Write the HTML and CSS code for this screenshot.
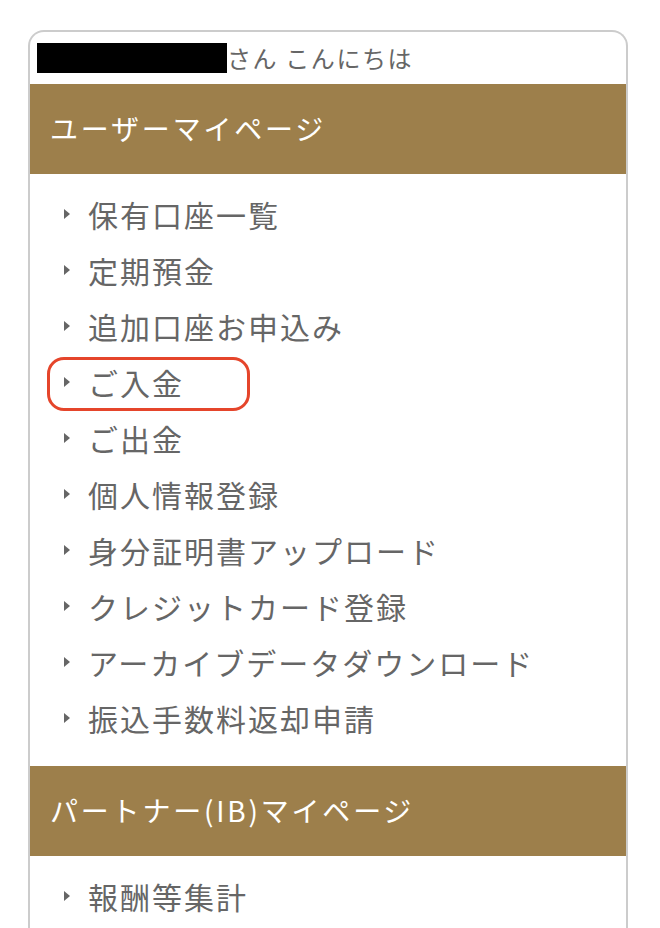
FILE: index.html
```html
<!DOCTYPE html>
<html lang="ja">
<head>
<meta charset="utf-8">
<title>マイページ</title>
<link rel="stylesheet" href="styles.css">
</head>
<body>
<div class="card">
  <div class="greeting"><span class="name-mask"></span><span class="hello">さん こんにちは</span></div>
  <h2 class="section-title">ユーザーマイページ</h2>
  <ul class="menu">
    <li class="item">保有口座一覧</li>
    <li class="item">定期預金</li>
    <li class="item">追加口座お申込み</li>
    <li class="item highlighted">ご入金</li>
    <li class="item">ご出金</li>
    <li class="item">個人情報登録</li>
    <li class="item">身分証明書アップロード</li>
    <li class="item">クレジットカード登録</li>
    <li class="item">アーカイブデータダウンロード</li>
    <li class="item">振込手数料返却申請</li>
  </ul>
  <h2 class="section-title">パートナー(IB)マイページ</h2>
  <ul class="menu">
    <li class="item">報酬等集計</li>
  </ul>
</div>
</body>
</html>
```

FILE: styles.css
```css
html, body {
  margin: 0;
  padding: 0;
  background: #ffffff;
}
body {
  font-family: "Noto Sans CJK JP", "Noto Sans", sans-serif;
  color: #666666;
}
.card {
  margin: 30px 0 0 28px;
  width: 596px;
  border: 2px solid #cccccc;
  border-bottom: none;
  border-radius: 16px 16px 0 0;
  padding-bottom: 40px;
}
.greeting {
  height: 52px;
  display: flex;
  align-items: center;
  padding-left: 7px;
}
.name-mask {
  display: inline-block;
  width: 190px;
  height: 30px;
  background: #000000;
}
.hello {
  font-size: 24px;
  line-height: 30px;
  letter-spacing: 1.6px;
  color: #666666;
}
.section-title {
  margin: 0;
  height: 90px;
  box-sizing: border-box;
  display: flex;
  align-items: center;
  padding: 0 0 3px 20px;
  background: #9d7f4b;
  color: #ffffff;
  font-weight: 400;
  font-size: 28px;
  letter-spacing: 2.8px;
}
.menu {
  list-style: none;
  margin: 0;
  padding: 14px 0 18px 0;
}
.item {
  position: relative;
  height: 56px;
  box-sizing: border-box;
  display: flex;
  align-items: center;
  padding: 0 0 4px 58px;
  font-size: 30px;
  letter-spacing: 2px;
  color: #666666;
}
.item::before {
  content: "";
  position: absolute;
  left: 34px;
  top: 21px;
  width: 0;
  height: 0;
  border-top: 5px solid transparent;
  border-bottom: 5px solid transparent;
  border-left: 6px solid #666666;
}
.highlighted::after {
  content: "";
  position: absolute;
  left: 17px;
  top: 1px;
  width: 203px;
  height: 54px;
  box-sizing: border-box;
  border: 3px solid #e5452b;
  border-radius: 17px;
}
```
